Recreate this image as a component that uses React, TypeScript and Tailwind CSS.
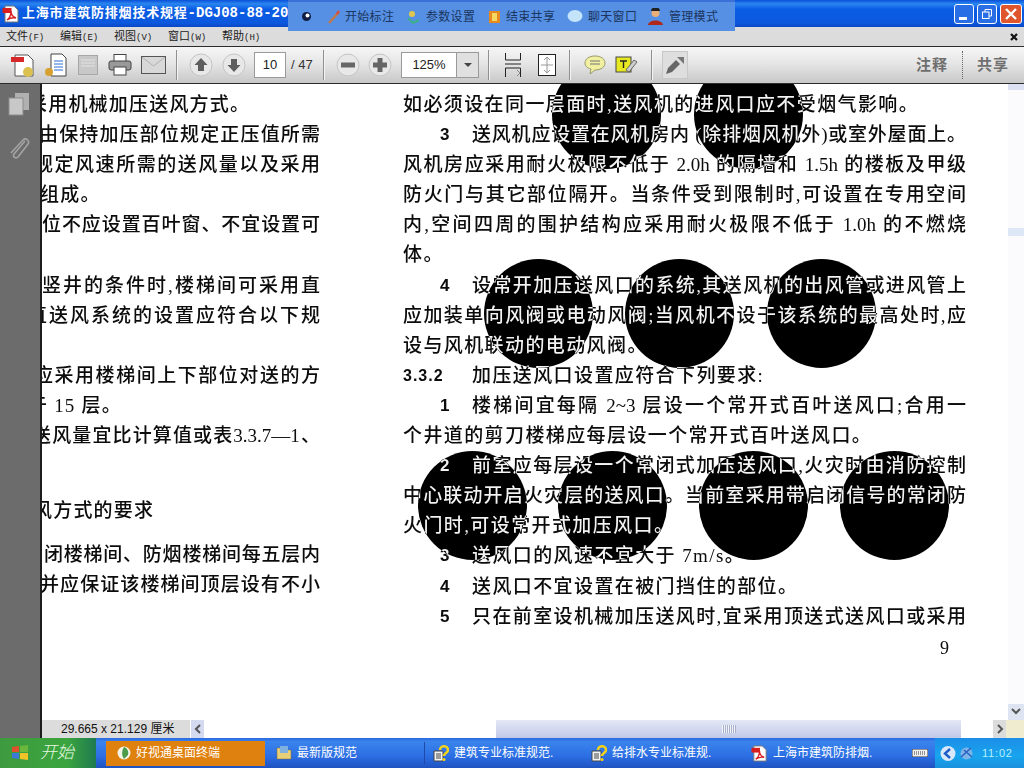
import React from "react";

const CJK = "font-['Liberation_Sans','Noto_Sans_CJK_SC',sans-serif]";

function Sep() {
  return <div className="w-px h-[30px] bg-[#8f8f8f] border-r border-[#f4f4f4] box-content" />;
}

function PdfIcon({ size = 18 }: { size?: number }) {
  return (
    <svg width={size} height={size} viewBox="0 0 18 18">
      <path d="M3 1h9l4 4v12H3z" fill="#fff" stroke="#777" />
      <rect x="0.5" y="3" width="9" height="5" fill="#d81e1e" />
      <path d="M5 15c3-2 4-6 4-9 0 3 2 6 5 7-3-.5-6 0-9 2z" fill="none" stroke="#d81e1e" strokeWidth="1.4" />
    </svg>
  );
}

function HelpIcon() {
  return (
    <svg width="16" height="17" viewBox="0 0 16 17">
      <path d="M1 6h9v10H1z" fill="#f3f3f3" stroke="#444" />
      <path d="M3 9h5M3 11h5M3 13h5" stroke="#444" />
      <path d="M7 5c0-5 8-5 8 0 0 3-4 3-4 6" fill="none" stroke="#f2d21a" strokeWidth="2.6" />
      <circle cx="11" cy="14.5" r="1.6" fill="#f2d21a" />
    </svg>
  );
}

function Circle({ cls }: { cls: string }) {
  return <div className={`absolute w-[109px] h-[109px] rounded-full bg-white mix-blend-difference ${cls}`} />;
}

function Rt({ children, j = true, cls = "" }: { children?: React.ReactNode; j?: boolean; cls?: string }) {
  return (
    <div className={`h-[30.1px] leading-[30px] whitespace-nowrap ${j ? "[text-align-last:justify]" : "tracking-[1.4px]"} ${cls}`}>
      {children}
    </div>
  );
}

function Item({ n, children, j = true }: { n: string; children: React.ReactNode; j?: boolean }) {
  return (
    <div className="flex h-[30.1px] leading-[30px] whitespace-nowrap pl-[37px]">
      <span className="w-[32px] font-['Liberation_Sans'] font-bold text-[17px]">{n}</span>
      <span className={`flex-1 ${j ? "[text-align-last:justify]" : "tracking-[1.4px]"}`}>{children}</span>
    </div>
  );
}

function Lf({ children, cls = "w-[278px]", j = true }: { children?: React.ReactNode; cls?: string; j?: boolean }) {
  return (
    <div className={`h-[30.1px] shrink-0 leading-[30px] whitespace-nowrap ${j ? "[text-align-last:justify]" : "tracking-[1.2px]"} ${cls}`}>
      {children}
    </div>
  );
}

function Task({ icon, text, cls = "" }: { icon: React.ReactNode; text: string; cls?: string }) {
  return (
    <div className={`h-[24px] flex items-center gap-[5px] pl-[4px] text-[12px] text-white whitespace-nowrap overflow-hidden ${cls}`}>
      <span className="shrink-0 flex">{icon}</span>
      {text}
    </div>
  );
}

export default function App() {
  return (
    <div className={`relative w-[1024px] h-[768px] overflow-hidden flex flex-col bg-white text-black ${CJK}`}>
      {/* title bar */}
      <div className="h-[27px] shrink-0 flex items-center bg-[linear-gradient(#0a50d8_0%,#2a86f0_14%,#0a5ce4_34%,#0b58de_85%,#0a46c4_100%)]">
        <div className="ml-[2px] mr-[2px] flex"><PdfIcon /></div>
        <span className="text-white font-bold text-[13px] tracking-[0.8px] whitespace-nowrap">
          上海市建筑防排烟技术规程<span className="font-['Liberation_Mono'] text-[14px] tracking-[0px]">-DGJ08-88-2006</span>
        </span>
        <div className="ml-auto mr-[2px] flex gap-[3px]">
          <div className="w-[20px] h-[20px] rounded-[3px] border border-white bg-[#2a6ee6] flex items-end pl-[4px] pb-[3px]">
            <div className="w-[8px] h-[3px] bg-white" />
          </div>
          <div className="w-[20px] h-[20px] rounded-[3px] border border-white bg-[#2a6ee6] flex items-center justify-center">
            <svg width="12" height="12" viewBox="0 0 12 12" fill="none" stroke="#fff"><rect x="1.5" y="4" width="6.5" height="6.5" /><path d="M4 4V1.5h6.5V8H8" /></svg>
          </div>
          <div className="w-[22px] h-[20px] rounded-[3px] border border-white bg-[#e0562c] flex items-center justify-center">
            <svg width="14" height="14" viewBox="0 0 14 14" stroke="#fff" strokeWidth="2.4"><path d="M2 2l10 10M12 2L2 12" /></svg>
          </div>
        </div>
      </div>

      {/* floating share bar */}
      <div className="absolute left-[288px] top-0 w-[447px] h-[31px] bg-[#5590e4] border-t-2 border-[#3a70d8] flex items-center text-[12px] text-[#1b3560] whitespace-nowrap z-10">
        <svg className="ml-[13px]" width="11" height="11" viewBox="0 0 11 11"><circle cx="5.5" cy="5.5" r="4.5" fill="#101c40" /><circle cx="6.5" cy="4.5" r="2" fill="#fff" /></svg>
        <svg className="ml-[15px]" width="14" height="14" viewBox="0 0 14 14"><path d="M2 13l9-10" stroke="#c07848" strokeWidth="2.5" /><path d="M10 4l2-3" stroke="#d84c3c" strokeWidth="2.5" /></svg>
        <span className="ml-[4px] tracking-[0.3px] w-[50px]">开始标注</span>
        <svg className="ml-[12px]" width="13" height="14" viewBox="0 0 13 14"><circle cx="5" cy="4" r="3" fill="#e0c850" /><path d="M1 8l5 5 6-3" fill="none" stroke="#3cb088" strokeWidth="2" /></svg>
        <span className="ml-[6px] tracking-[0.3px] w-[50px]">参数设置</span>
        <svg className="ml-[12px]" width="13" height="14" viewBox="0 0 13 14"><rect x="1" y="1" width="11" height="12" fill="#e88820" /><rect x="4" y="3" width="5" height="8" fill="#f4d860" /></svg>
        <span className="ml-[5px] tracking-[0.3px] w-[50px]">结束共享</span>
        <svg className="ml-[11px]" width="16" height="13" viewBox="0 0 16 13"><ellipse cx="8" cy="6" rx="7.5" ry="6" fill="#c4e4fa" /></svg>
        <span className="ml-[5px] tracking-[0.3px] w-[50px]">聊天窗口</span>
        <svg className="ml-[9px]" width="17" height="18" viewBox="0 0 17 18"><circle cx="8.5" cy="5" r="4" fill="#e8b078" /><path d="M4 3a4.5 4 0 0 1 9 0z" fill="#202020" /><path d="M1 17c1-6 14-6 15 0z" fill="#b02818" /></svg>
        <span className="ml-[5px] tracking-[0.3px]">管理模式</span>
      </div>

      {/* menu bar */}
      <div className="h-[19px] shrink-0 bg-[#dcdcdc] flex items-center pl-[6px] text-[11px] text-[#202020] whitespace-nowrap relative">
        <span className="w-[54px]">文件<span className="text-[9px] font-['Liberation_Mono']">(F)</span></span>
        <span className="w-[54px]">编辑<span className="text-[9px] font-['Liberation_Mono']">(E)</span></span>
        <span className="w-[54px]">视图<span className="text-[9px] font-['Liberation_Mono']">(V)</span></span>
        <span className="w-[54px]">窗口<span className="text-[9px] font-['Liberation_Mono']">(W)</span></span>
        <span>帮助<span className="text-[9px] font-['Liberation_Mono']">(H)</span></span>
        <svg className="ml-auto mr-[6px]" width="8" height="8" viewBox="0 0 8 8" stroke="#111" strokeWidth="2.2"><path d="M1 1l6 6M7 1L1 7" /></svg>
      </div>

      {/* toolbar */}
      <div className="h-[38px] shrink-0 border-y border-[#2c2c2c] bg-[linear-gradient(#f6f6f6,#e6e6e6_45%,#c8c8c8)] flex items-center whitespace-nowrap">
        <svg className="ml-[11px]" width="24" height="26" viewBox="0 0 24 26">
          <path d="M4 3h13l5 5v16H4z" fill="#fff" stroke="#555" />
          <rect x="0" y="5" width="13" height="5" fill="#d62828" />
          <circle cx="17" cy="20" r="5" fill="#dcc050" />
        </svg>
        <svg className="ml-[9px]" width="24" height="26" viewBox="0 0 24 26">
          <path d="M7 2h11l4 4v18H7z" fill="#fff" stroke="#444" />
          <path d="M10 9h9M10 12h9M10 15h9M10 18h9" stroke="#2a6cd8" />
          <circle cx="5" cy="20" r="4" fill="#d8a030" />
        </svg>
        <svg className="ml-[9px]" width="22" height="22" viewBox="0 0 22 22">
          <rect x="1.5" y="1.5" width="19" height="19" fill="#c8c8c8" stroke="#a8a8a8" />
          <path d="M4 6h14M4 9h14M4 12h14" stroke="#e4e4e4" />
        </svg>
        <svg className="ml-[9px]" width="24" height="24" viewBox="0 0 24 24">
          <rect x="6" y="1.5" width="12" height="7" fill="#fff" stroke="#444" />
          <rect x="1" y="8" width="22" height="9" rx="2" fill="#999" stroke="#444" />
          <rect x="6" y="14" width="12" height="8" fill="#fff" stroke="#444" />
        </svg>
        <svg className="ml-[9px]" width="25" height="18" viewBox="0 0 25 18">
          <rect x="0.5" y="0.5" width="24" height="17" fill="#d8d8d8" stroke="#555" />
          <path d="M1 1l11.5 9L24 1" fill="none" stroke="#b0b0b0" />
        </svg>
        <div className="ml-[10px]"><Sep /></div>
        <svg className="ml-[11px]" width="24" height="24" viewBox="0 0 24 24">
          <circle cx="12" cy="12" r="11" fill="#e8e8e8" stroke="#c4c4c4" />
          <path d="M12 5l6.5 7H15v6H9v-6H5.500z" fill="#5e5e5e" />
        </svg>
        <svg className="ml-[9px]" width="24" height="24" viewBox="0 0 24 24">
          <circle cx="12" cy="12" r="11" fill="#e8e8e8" stroke="#c4c4c4" />
          <path d="M12 19l6.5-7H15V6H9v6H5.500z" fill="#5e5e5e" />
        </svg>
        <div className="ml-[8px] w-[32px] h-[26px] bg-white border border-[#9a9a9a] flex items-center justify-center text-[13px] font-['Liberation_Sans'] text-[#222]">10</div>
        <span className="ml-[5px] w-[32px] text-[13px] text-[#333] font-['Liberation_Sans']">/ 47</span>
        <Sep />
        <svg className="ml-[11px]" width="24" height="24" viewBox="0 0 24 24">
          <circle cx="12" cy="12" r="11" fill="#e8e8e8" stroke="#c4c4c4" />
          <rect x="5" y="9.500" width="14" height="5" fill="#666" />
        </svg>
        <svg className="ml-[8px]" width="24" height="24" viewBox="0 0 24 24">
          <circle cx="12" cy="12" r="11" fill="#e8e8e8" stroke="#c4c4c4" />
          <path d="M5 9.500h4.500V5h5v4.500H19v5h-4.500V19h-5v-4.500H5z" fill="#666" />
        </svg>
        <div className="ml-[9px] w-[78px] h-[26px] bg-white border border-[#9a9a9a] flex items-center">
          <span className="w-[54px] text-center text-[13px] font-['Liberation_Sans'] text-[#222]">125%</span>
          <div className="flex-1 h-full bg-[#e0e0e0] border-l border-[#9a9a9a] flex items-center justify-center">
            <div className="w-0 h-0 border-x-[4px] border-x-transparent border-t-[4px] border-t-[#444]" />
          </div>
        </div>
        <div className="ml-[9px]"><Sep /></div>
        <svg className="ml-[14px]" width="18" height="24" viewBox="0 0 18 24" fill="none">
          <path d="M1.500 0v7h15V0M1 11h16M1.500 24v-9h15v9" stroke="#222" />
          <path d="M13 17l3 3-3 3" stroke="#888" />
        </svg>
        <svg className="ml-[16px]" width="18" height="22" viewBox="0 0 18 22">
          <rect x="0.5" y="0.5" width="17" height="21" fill="#fff" stroke="#222" />
          <path d="M9 3v16M3 11h12M6 6l3-3 3 3M6 16l3 3 3-3" fill="none" stroke="#999" />
        </svg>
        <div className="ml-[13px]"><Sep /></div>
        <svg className="ml-[13px]" width="22" height="20" viewBox="0 0 22 20">
          <path d="M11 1c6 0 10 3 10 7s-4 7-10 7l-5 4 1-5C3 13 1 11 1 8c0-4 4-7 10-7z" fill="#f0f0a0" stroke="#9a9a6c" />
          <path d="M6 6h10M6 9h10" stroke="#777" />
        </svg>
        <svg className="ml-[9px]" width="23" height="19" viewBox="0 0 23 19">
          <rect x="1" y="1" width="15" height="15" fill="#e8e820" stroke="#444" />
          <path d="M5 5h7M8.500 5v7" stroke="#222" strokeWidth="1.4" />
          <path d="M14 16l8-10-3-2-8 10z" fill="#ccc" stroke="#666" />
        </svg>
        <div className="ml-[13px]"><Sep /></div>
        <div className="ml-[9px] w-[26px] h-[28px] border border-[#c8c8c8] bg-[#dedede] flex items-center justify-center">
          <svg width="22" height="22" viewBox="0 0 22 22">
            <path d="M2 20l2-6 8-8 4 4-8 8z" fill="#666" />
            <path d="M13 3h7v7z" fill="#777" />
          </svg>
        </div>
        <span className="ml-auto text-[15px] font-bold text-[#6e6e6e] tracking-[1px]">注释</span>
        <div className="ml-[14px] h-[28px] border-l border-dotted border-[#666]" />
        <span className="ml-[14px] mr-[15px] text-[15px] font-bold text-[#707070] tracking-[1px]">共享</span>
      </div>

      {/* body */}
      <div className="flex-1 min-h-0 flex">
        <div className="w-[42px] shrink-0 bg-[#6c6c6c] border-r-2 border-[#1c1c1c] flex flex-col items-center pr-[2px] pt-[8px] gap-[19px]">
          <svg width="22" height="24" viewBox="0 0 22 24">
            <rect x="7" y="1" width="14" height="17" fill="#b0b0b0" />
            <rect x="1" y="6" width="14" height="17" fill="#c8c8c8" stroke="#8c8c8c" />
          </svg>
          <svg width="22" height="26" viewBox="0 0 22 26" fill="none" stroke="#a4a4a4" strokeWidth="1.6">
            <path d="M17 6L6 19c-2 3 2 5 4 3L20 9c2-3-2-7-5-4L3 18" />
          </svg>
        </div>

        <div className="flex-1 min-w-0 flex flex-col">
          <div className="flex-1 min-h-0 flex relative isolate overflow-hidden bg-white">
            <div className="flex-1 min-w-0 flex text-[19px] font-medium font-['Liberation_Serif','Noto_Sans_CJK_SC',sans-serif] text-[#0c0c0c] pt-[6px] blur-[0.35px]">
              <div className="w-[278px] shrink-0 overflow-hidden flex flex-col">
                <Lf j={false} cls="ml-[-14px]">采用机械加压送风方式。</Lf>
                <Lf cls="ml-[-3px] w-[281px]">由保持加压部位规定正压值所需</Lf>
                <Lf cls="ml-[-8px] w-[286px]">规定风速所需的送风量以及采用</Lf>
                <Lf j={false} cls="ml-[-2px]">组成。</Lf>
                <Lf cls="w-[278px]">位不应设置百叶窗、不宜设置可</Lf>
                <Lf />
                <Lf cls="w-[278px]">竖井的条件时,楼梯间可采用直</Lf>
                <Lf cls="ml-[-14px] w-[292px]">直送风系统的设置应符合以下规</Lf>
                <Lf />
                <Lf cls="ml-[-8px] w-[286px]">应采用楼梯间上下部位对送的方</Lf>
                <Lf j={false} cls="ml-[-14px]">于 15 层。</Lf>
                <Lf cls="ml-[-10px] w-[288px]">送风量宜比计算值或表3.3.7—1、</Lf>
                <Lf />
                <Lf j={false} cls="ml-[-9px] mt-[15px]">风方式的要求</Lf>
                <Lf cls="ml-[2px] w-[276px] mt-[14px]">闭楼梯间、防烟楼梯间每五层内</Lf>
                <Lf cls="ml-[-2px] w-[280px]">并应保证该楼梯间顶层设有不小</Lf>
              </div>
              <div className="ml-[83px] w-[563px] shrink-0 flex flex-col">
                <Rt j={false}>如必须设在同一层面时,送风机的进风口应不受烟气影响。</Rt>
                <Item n="3">送风机应设置在风机房内 (除排烟风机外)或室外屋面上。</Item>
                <Rt>风机房应采用耐火极限不低于 2.0h 的隔墙和 1.5h 的楼板及甲级</Rt>
                <Rt>防火门与其它部位隔开。当条件受到限制时,可设置在专用空间</Rt>
                <Rt>内,空间四周的围护结构应采用耐火极限不低于 1.0h 的不燃烧</Rt>
                <Rt j={false}>体。</Rt>
                <Item n="4">设常开加压送风口的系统,其送风机的出风管或进风管上</Item>
                <Rt>应加装单向风阀或电动风阀;当风机不设于该系统的最高处时,应</Rt>
                <Rt j={false}>设与风机联动的电动风阀。</Rt>
                <div className="flex h-[30.1px] leading-[30px] whitespace-nowrap">
                  <span className="w-[69px] font-['Liberation_Sans'] font-bold text-[16px] tracking-[1px]">3.3.2</span>
                  <span className="tracking-[1.4px]">加压送风口设置应符合下列要求:</span>
                </div>
                <Item n="1">楼梯间宜每隔 2~3 层设一个常开式百叶送风口;合用一</Item>
                <Rt j={false}>个井道的剪刀楼梯应每层设一个常开式百叶送风口。</Rt>
                <Item n="2">前室应每层设一个常闭式加压送风口,火灾时由消防控制</Item>
                <Rt>中心联动开启火灾层的送风口。当前室采用带启闭信号的常闭防</Rt>
                <Rt j={false}>火门时,可设常开式加压风口。</Rt>
                <Item n="3" j={false}>送风口的风速不宜大于 7m/s。</Item>
                <Item n="4" j={false}>送风口不宜设置在被门挡住的部位。</Item>
                <Item n="5">只在前室设机械加压送风时,宜采用顶送式送风口或采用</Item>
                <div className="h-[30px] leading-[33px] text-right pr-[17px] text-[18px]">9</div>
              </div>
            </div>
            <div className="w-[16px] shrink-0 bg-[#fbfbfe] flex flex-col items-center">
              <div className="w-full h-[6px] bg-[#dce2f4]" />
              <div className="w-full h-[8px] mt-[138px] bg-[#dde7f6]" />
              <div className="w-full h-[16px] mt-auto bg-[#dfe4f2] flex items-center justify-center">
                <svg width="10" height="8" viewBox="0 0 10 8" fill="none" stroke="#555" strokeWidth="2"><path d="M1 1l4 4 4-4" /></svg>
              </div>
            </div>
            <Circle cls="left-[510px] top-[-24px]" />
            <Circle cls="left-[652px] top-[-24px]" />
            <Circle cls="left-[442px] top-[175px]" />
            <Circle cls="left-[583px] top-[175px]" />
            <Circle cls="left-[725px] top-[175px]" />
            <Circle cls="left-[376px] top-[367px]" />
            <Circle cls="left-[516px] top-[367px]" />
            <Circle cls="left-[657px] top-[367px]" />
            <Circle cls="left-[798px] top-[367px]" />
          </div>

          {/* status */}
          <div className="h-[18px] shrink-0 flex items-center text-[12px] text-[#111] whitespace-nowrap">
            <div className="w-[148px] h-full bg-[#dcdcdc] flex items-center pl-[19px]">29.665 x 21.129 厘米</div>
            <div className="w-[13px] h-full ml-[1px] bg-[#d4daf0] flex items-center justify-center">
              <svg width="8" height="10" viewBox="0 0 8 10" fill="none" stroke="#555" strokeWidth="2"><path d="M6 1L2 5l4 4" /></svg>
            </div>
            <div className="w-[292px] h-full bg-white" />
            <div className="w-[465px] h-full bg-[linear-gradient(#e4e8f6,#c0c8e8)] flex items-center justify-center">
              <div className="w-[14px] h-[8px] bg-[repeating-linear-gradient(90deg,#f4f4f8_0_1px,#a8b0cc_1px_2px)]" />
            </div>
            <div className="w-[32px] h-full bg-white" />
            <div className="w-[13px] h-full bg-[#dcdcdc] flex items-center justify-center">
              <svg width="8" height="10" viewBox="0 0 8 10" fill="none" stroke="#555" strokeWidth="2"><path d="M2 1l4 4-4 4" /></svg>
            </div>
            <div className="flex-1 h-full bg-[#f0ecd0]" />
          </div>
        </div>
      </div>

      {/* taskbar */}
      <div className="h-[30px] shrink-0 flex items-center bg-[linear-gradient(#2a68e0,#3a84ec_12%,#2c6ee4_60%,#1f52c0)] whitespace-nowrap">
        <div className="w-[96px] h-full flex items-center pl-[11px] bg-[linear-gradient(90deg,#3f9a3f,#3aa53e_70%,#1e7a50)] shrink-0">
          <svg width="18" height="18" viewBox="0 0 18 18">
            <path d="M1 3l7-1v6H1z" fill="#e0502c" />
            <path d="M9 2l8-1v7H9z" fill="#6cb83c" />
            <path d="M1 9h7v6l-7-1z" fill="#3c78d8" />
            <path d="M9 9h8v7l-8-1z" fill="#f0c428" />
          </svg>
          <span className="ml-[11px] text-[#e4f8e0] italic text-[17px] font-light">开始</span>
        </div>
        <div className="ml-[10px] w-[159px] h-[25px] bg-[#df810e]">
          <Task
            cls="!h-[25px] pl-[11px] text-[#fdf0d8]"
            text="好视通桌面终端"
            icon={
              <svg width="14" height="14" viewBox="0 0 14 14">
                <circle cx="7" cy="7" r="6.500" fill="#f4f4e8" />
                <path d="M7 1c3 1 5 4 4 8L7 13C5 10 4 6 7 1z" fill="#4c9c4c" />
              </svg>
            }
          />
        </div>
        <Task
          cls="ml-[7px] w-[152px]"
          text="最新版规范"
          icon={
            <svg width="16" height="14" viewBox="0 0 16 14">
              <path d="M1 2h6l2 2h6v9H1z" fill="#e8d078" stroke="#806830" strokeWidth="0.5" />
              <rect x="4" y="0" width="8" height="7" fill="#7fb0e0" />
            </svg>
          }
        />
        <div className="w-px h-[22px] bg-[#1d4aa8] mr-[4px]" />
        <Task cls="w-[158px]" text="建筑专业标准规范." icon={<HelpIcon />} />
        <Task cls="w-[160px]" text="给排水专业标准规." icon={<HelpIcon />} />
        <Task cls="w-[165px]" text="上海市建筑防排烟." icon={<PdfIcon size={17} />} />
        <svg width="16" height="8" viewBox="0 0 16 8" className="shrink-0">
          <rect width="16" height="8" fill="#f2f2f2" stroke="#333" />
          <path d="M2 3h12M2 5h12" stroke="#333" strokeDasharray="1 1" />
        </svg>
        <div className="ml-[7px] flex-1 h-full flex items-center bg-[linear-gradient(#1c8ee8,#18a4ee_60%,#1a90dc)]">
          <svg className="ml-[5px]" width="16" height="17" viewBox="0 0 16 17">
            <circle cx="8" cy="8.500" r="7.500" fill="#d8e8fa" />
            <path d="M10 4L5 8.500l5 4.500" fill="none" stroke="#1c5cc8" strokeWidth="2.4" />
          </svg>
          <svg className="ml-[3px]" width="15" height="15" viewBox="0 0 15 15">
            <circle cx="7.500" cy="7.500" r="6" fill="#7cb4e8" />
            <path d="M2 11L12 2M5 4l8 7" stroke="#2c60c0" strokeWidth="1.500" />
          </svg>
          <span className="ml-[8px] text-[11px] text-[#b8f0ff] font-['Liberation_Sans'] tracking-[0.8px]">11:02</span>
        </div>
      </div>
    </div>
  );
}
